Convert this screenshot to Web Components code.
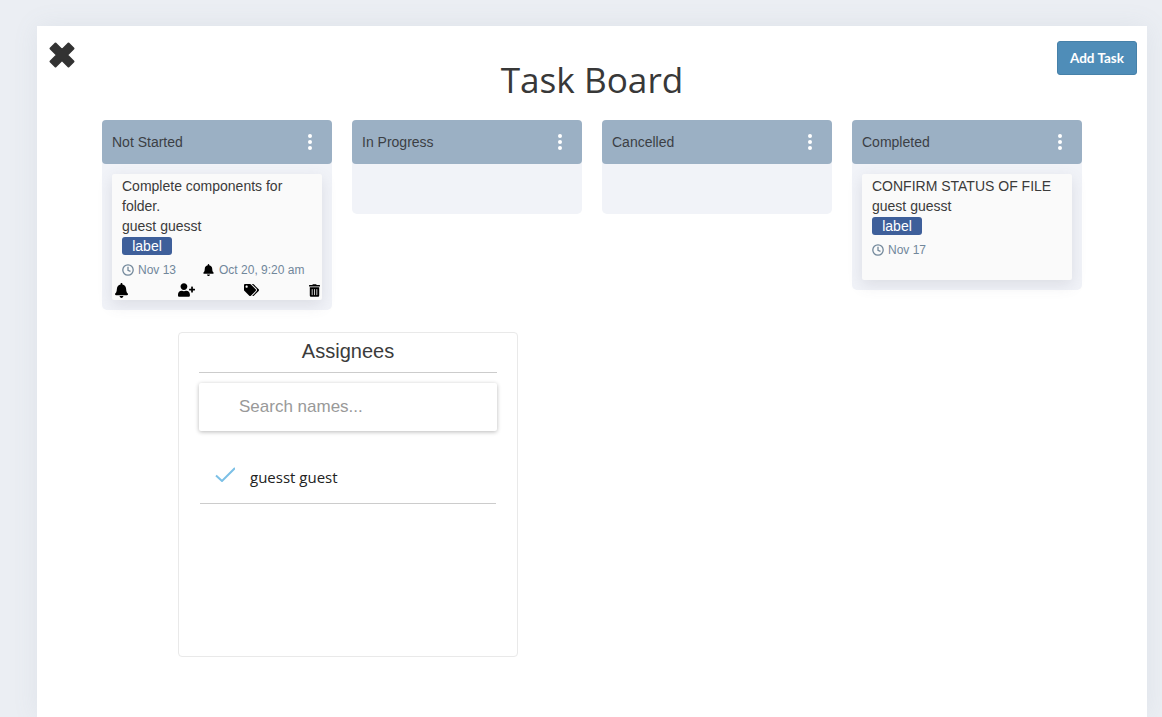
<!DOCTYPE html>
<html>
<head>
<meta charset="utf-8">
<title>Task Board</title>
<style>
    html, body { margin: 0; height: 100%; overflow: hidden; background: #ebeef3; }
</style>
</head>
<body>
<task-page>
    <board-column name="Not Started">
        <task-card title-text="Complete components for folder." owner="guest guesst" due="Nov 13" reminder="Oct 20, 9:20 am" actions></task-card>
    </board-column>
    <board-column name="In Progress"></board-column>
    <board-column name="Cancelled"></board-column>
    <board-column name="Completed">
        <task-card title-text="CONFIRM STATUS OF FILE" owner="guest guesst" due="Nov 17"></task-card>
    </board-column>
    <assignee-panel slot="panel"></assignee-panel>
</task-page>

<script>
const BELL = 'M224 512c35.32 0 63.97-28.65 63.97-64H160.03c0 35.35 28.65 64 63.97 64zm215.39-149.71c-19.32-20.76-55.47-51.99-55.47-154.29 0-77.7-54.48-139.9-127.94-155.16V32c0-17.67-14.32-32-31.98-32s-31.98 14.33-31.98 32v20.84C118.56 68.1 64.08 130.3 64.08 208c0 102.3-36.15 133.53-55.47 154.29-6 6.45-8.66 14.16-8.61 21.71.11 16.4 12.98 32 32.1 32h383.8c19.12 0 32-15.6 32.1-32 .05-7.55-2.61-15.27-8.61-21.71z';
const USER_PLUS = 'M624 208h-64v-64c0-8.8-7.2-16-16-16h-32c-8.8 0-16 7.2-16 16v64h-64c-8.8 0-16 7.2-16 16v32c0 8.8 7.2 16 16 16h64v64c0 8.8 7.2 16 16 16h32c8.8 0 16-7.2 16-16v-64h64c8.8 0 16-7.2 16-16v-32c0-8.8-7.2-16-16-16zm-400 48c70.7 0 128-57.3 128-128S294.7 0 224 0 96 57.3 96 128s57.3 128 128 128zm89.6 32h-16.7c-22.2 10.2-46.9 16-72.9 16s-50.6-5.8-72.9-16h-16.7C60.2 288 0 348.2 0 422.4V464c0 26.5 21.5 48 48 48h352c26.5 0 48-21.5 48-48v-41.6c0-74.2-60.2-134.4-134.4-134.4z';
const TAGS = 'M497.941 225.941L286.059 14.059A48 48 0 0 0 252.118 0H48C21.49 0 0 21.49 0 48v204.118a48 48 0 0 0 14.059 33.941l211.882 211.882c18.744 18.745 49.136 18.746 67.882 0l204.118-204.118c18.745-18.745 18.745-49.137 0-67.882zM112 160c-26.51 0-48-21.49-48-48s21.49-48 48-48 48 21.49 48 48-21.49 48-48 48zm513.941 133.823L421.823 497.941c-18.745 18.745-49.137 18.745-67.882 0l-.36-.36L527.64 323.522c16.999-16.999 26.36-39.6 26.36-63.64s-9.362-46.641-26.36-63.64L331.397 0h48.721a48 48 0 0 1 33.941 14.059l211.882 211.882c18.745 18.745 18.745 49.137 0 67.882z';
const TRASH = 'M32 464a48 48 0 0 0 48 48h288a48 48 0 0 0 48-48V128H32zm272-256a16 16 0 0 1 32 0v224a16 16 0 0 1-32 0zm-96 0a16 16 0 0 1 32 0v224a16 16 0 0 1-32 0zm-96 0a16 16 0 0 1 32 0v224a16 16 0 0 1-32 0zM432 32H312l-9.4-18.7A24 24 0 0 0 281.1 0H166.8a23.72 23.72 0 0 0-21.4 13.3L136 32H16A16 16 0 0 0 0 48v32a16 16 0 0 0 16 16h416a16 16 0 0 0 16-16V48a16 16 0 0 0-16-16z';

const icon = (d, w, h, vw) => `<svg width="${w}" height="${h}" viewBox="0 0 ${vw} 512" fill="currentColor"><path d="${d}"/></svg>`;
const CLOCK = `<svg class="clock" width="12" height="12" viewBox="0 0 12 12" fill="none" stroke="currentColor" stroke-width="1.3"><circle cx="6" cy="6" r="5.2"/><path d="M6 2.8V6.3L8.5 7.4"/></svg>`;

class TaskPage extends HTMLElement {
    constructor() {
        super();
        this.attachShadow({ mode: 'open' });
    }

    connectedCallback() {
        this.shadowRoot.innerHTML = `
        <style>
            :host {
                display: flex;
                box-sizing: border-box;
                height: 100vh;
                padding: 26px 15px 0 37px;
                font-family: "Liberation Sans", Arial, sans-serif;
                color: #3b3b3b;
            }
            .panel {
                flex: 1;
                background: #fff;
                box-shadow: 0 0 24px rgba(120, 135, 155, .1);
            }
            .top {
                display: grid;
                grid-template-columns: 1fr auto 1fr;
                height: 94px;
            }
            .close { padding: 15px 0 0 11px; }
            .close svg { display: block; }
            h1 {
                margin: 0;
                padding-top: 29px;
                font: 400 35.2px/48px "Open Sans", sans-serif;
                color: #383838;
            }
            .right { display: flex; justify-content: flex-end; padding: 15px 10px 0 0; align-items: flex-start; }
            button {
                width: 80px;
                height: 34px;
                padding: 0;
                background: #4f8db8;
                border: 1px solid #4681a9;
                border-radius: 3px;
                color: #fff;
                font: 700 13.5px Lato, sans-serif;
            }
            .board {
                display: grid;
                grid-template-columns: repeat(4, 230px);
                gap: 20px;
                align-items: start;
                padding-left: 65px;
            }
            .below { padding: 22px 0 0 141px; }
        </style>
        <div class="panel">
            <div class="top">
                <div class="close">
                    <svg width="28" height="28" viewBox="0 0 28 28"><path d="M7.5 2.5L14 9L20.5 2.5L25.5 7.5L19 14L25.5 20.5L20.5 25.5L14 19L7.5 25.5L2.5 20.5L9 14L2.5 7.5Z" fill="#333" stroke="#333" stroke-width="2" stroke-linejoin="round"/></svg>
                </div>
                <h1>Task Board</h1>
                <div class="right"><button>Add Task</button></div>
            </div>
            <div class="board"><slot></slot></div>
            <div class="below"><slot name="panel"></slot></div>
        </div>
        `;
    }
}

class BoardColumn extends HTMLElement {
    constructor() {
        super();
        this.attachShadow({ mode: 'open' });
    }

    connectedCallback() {
        this.shadowRoot.innerHTML = `
        <style>
            :host {
                display: block;
                background: #f1f3f8;
                border-radius: 5px;
            }
            .head {
                display: flex;
                justify-content: space-between;
                align-items: center;
                height: 44px;
                padding: 0 20px 0 10px;
                background: #9bb0c4;
                border-radius: 4px;
                font-size: 14px;
                color: #3b3f44;
            }
            .dots { display: flex; flex-direction: column; gap: 2px; }
            .dots i { width: 4px; height: 4px; border-radius: 50%; background: #fff; }
            .body { padding: 10px; min-height: 30px; }
        </style>
        <div class="head">
            <span>${this.getAttribute('name')}</span>
            <span class="dots"><i></i><i></i><i></i></span>
        </div>
        <div class="body"><slot></slot></div>
        `;
    }
}

class TaskCard extends HTMLElement {
    constructor() {
        super();
        this.attachShadow({ mode: 'open' });
    }

    connectedCallback() {
        const reminder = this.getAttribute('reminder');
        const hasActions = this.hasAttribute('actions');
        this.shadowRoot.innerHTML = `
        <style>
            :host {
                display: block;
                background: #fafafa;
                border-radius: 2px;
                font-size: 14px;
                line-height: 20px;
                color: #3b3b3b;
                box-shadow: 0 5px 15px rgba(90, 95, 110, .14);
            }
            .text { padding: 2px 10px 0; }
            .label {
                display: block;
                width: 50px;
                height: 18px;
                margin: 1px 0 0;
                background: #3e5f9a;
                border-radius: 3px;
                color: #fff;
                text-align: center;
                line-height: 18px;
            }
            .meta {
                display: flex;
                gap: 27px;
                height: 16px;
                margin-top: 7px;
                padding: 0 10px;
                font-size: 12px;
                line-height: 16px;
                color: #71879a;
            }
            .meta span { display: flex; align-items: center; gap: 5px; }
            .meta svg { flex: none; }
            .meta .clock { margin-right: -1px; }
            .bell { color: #000; }
            .actions {
                display: flex;
                justify-content: space-between;
                align-items: center;
                height: 20px;
                margin-top: 2px;
                padding: 0 2px 0 3px;
                color: #000;
            }
            .actions svg { display: block; }
        </style>
        <div class="text">
            <div>${this.getAttribute('title-text')}</div>
            <div>${this.getAttribute('owner')}</div>
            <span class="label">label</span>
        </div>
        <div class="meta">
            <span>${CLOCK}${this.getAttribute('due')}</span>
            ${reminder ? `<span><span class="bell">${icon(BELL, 11, 12, 448)}</span>${reminder}</span>` : ''}
        </div>
        <div class="actions">
            ${hasActions ? icon(BELL, 13, 15, 448) + icon(USER_PLUS, 17, 14, 640) + icon(TAGS, 15, 12, 640) + icon(TRASH, 11, 13, 448) : ''}
        </div>
        `;
    }
}

class AssigneePanel extends HTMLElement {
    constructor() {
        super();
        this.attachShadow({ mode: 'open' });
    }

    connectedCallback() {
        this.shadowRoot.innerHTML = `
        <style>
            :host {
                display: block;
                box-sizing: border-box;
                width: 340px;
                height: 325px;
                padding: 0 20px;
                background: #fff;
                border: 1px solid #e9e9e9;
                border-radius: 4px;
            }
            h2 {
                margin: 0;
                height: 39px;
                border-bottom: 1px solid #ccc;
                font: 400 20px/37px "Liberation Sans", Arial, sans-serif;
                text-align: center;
                color: #3b3b3b;
            }
            .search {
                box-sizing: border-box;
                height: 48px;
                margin-top: 10px;
                padding: 0 40px;
                border-radius: 2px;
                box-shadow: 0 1px 4px rgba(0, 0, 0, .28);
                font: 17px/47px "Liberation Sans", Arial, sans-serif;
                color: #999;
            }
            .row {
                display: flex;
                align-items: center;
                gap: 15px;
                box-sizing: border-box;
                height: 73px;
                margin: 0 1px;
                padding: 19px 0 0 15px;
                border-bottom: 1px solid #ccc;
                font: 15px "Open Sans", sans-serif;
                color: #222;
            }
            .row svg { flex: none; margin-top: -5px; }
        </style>
        <h2>Assignees</h2>
        <div class="search">Search names...</div>
        <div class="row">
            <svg width="20" height="15" viewBox="0 0 20 15" fill="none" stroke="#7cc0e6" stroke-width="2"><path d="M1 8.5L7 14L20 1"/></svg>
            <span>guesst guest</span>
        </div>
        `;
    }
}

customElements.define('task-page', TaskPage);
customElements.define('board-column', BoardColumn);
customElements.define('task-card', TaskCard);
customElements.define('assignee-panel', AssigneePanel);
</script>
</body>
</html>
